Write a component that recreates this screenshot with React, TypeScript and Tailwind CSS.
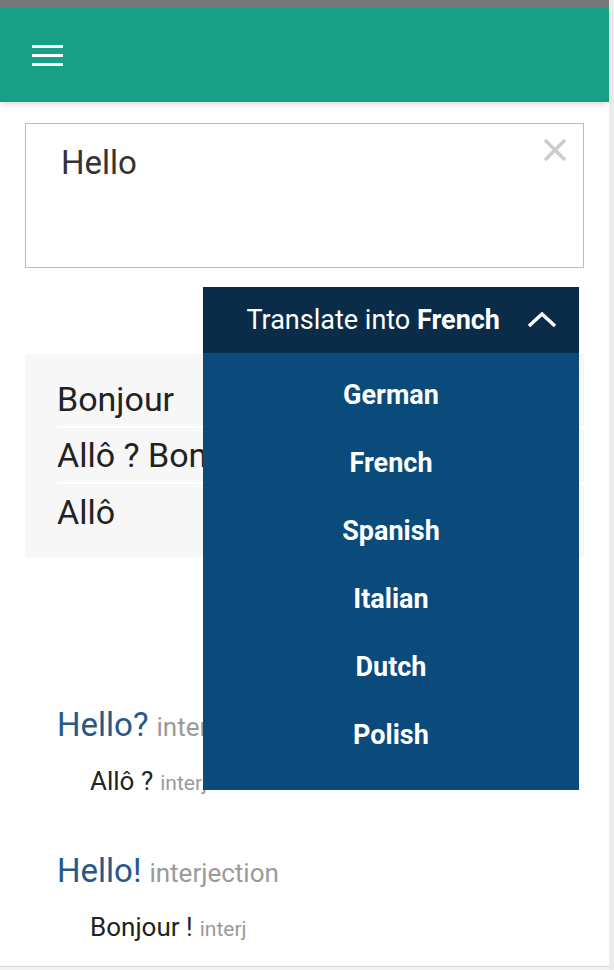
import React from "react";

const languages = ["German", "French", "Spanish", "Italian", "Dutch", "Polish"];

const results = ["Bonjour", "Allô ? Bonjour", "Allô"];

const entries = [
  { word: "Hello?", pos: "interjection", tr: "Allô ?", trPos: "interj" },
  { word: "Hello!", pos: "interjection", tr: "Bonjour !", trPos: "interj" },
];

export default function App() {
  return (
    <div
      className="flex w-[614px] h-[970px] overflow-hidden bg-white"
      style={{ fontFamily: "Roboto, 'Liberation Sans', sans-serif" }}
    >
      <div className="w-[609px] flex flex-col">
        <div className="h-[8px] bg-[#767676]" />
        <header className="h-[94px] bg-[#17a086] shadow-md flex items-center pl-[32px] relative z-20">
          <div className="flex flex-col gap-[6px] w-[31px]">
            <span className="h-[3px] bg-white" />
            <span className="h-[3px] bg-white" />
            <span className="h-[3px] bg-white" />
          </div>
        </header>

        <main className="px-[25px] flex flex-col">
          <div className="mt-[21px] h-[145px] border border-[#bdbdbd] flex justify-between pl-[35px] pr-[16px]">
            <div className="pt-[19px] text-[33px] leading-[40px] text-[#333]">Hello</div>
            <button className="mt-[14px] h-[24px] w-[24px] text-[#cbcbcb]">
              <svg viewBox="0 0 24 24" className="w-[24px] h-[24px]" fill="none" stroke="currentColor" strokeWidth="3.5">
                <path d="M2 2 L22 22 M22 2 L2 22" />
              </svg>
            </button>
          </div>

          <div className="relative z-10 mt-[19px] ml-auto mr-[5px] w-[376px]">
            <div className="h-[66px] bg-[#0b2c48] flex items-center justify-end gap-[27px] pr-[22px] text-white text-[27px]">
              <span>
                Translate into <span className="font-bold">French</span>
              </span>
              <svg viewBox="0 0 30 16" className="w-[30px] h-[16px]" fill="none" stroke="currentColor" strokeWidth="3.5">
                <polyline points="2,14 15,2 28,14" />
              </svg>
            </div>
            <ul className="absolute top-full left-0 right-0 bg-[#0a4b7b] pt-[8px] pb-[21px]">
              {languages.map((l) => (
                <li key={l} className="h-[68px] flex items-center justify-center text-white font-bold text-[27px]">
                  {l}
                </li>
              ))}
            </ul>
          </div>

          <div className="mt-[1px] bg-[#f7f7f7] pt-[18px] pb-[17px]">
            {results.map((r, i) => (
              <div
                key={r}
                className={`ml-[32px] h-[56px] flex items-center text-[34px] text-[#222] ${
                  i < results.length - 1 ? "border-b-2 border-white" : ""
                }`}
              >
                {r}
              </div>
            ))}
          </div>

          <div className="mt-[148px] pl-[32px] flex flex-col">
            {entries.map((e, i) => (
              <div key={e.word} className={i > 0 ? "mt-[54px]" : ""}>
                <div className="h-[40px] flex items-baseline gap-[8px]">
                  <span className="text-[33px] leading-[40px] text-[#285887]">{e.word}</span>
                  <span className="text-[26px] text-[#9a9a9a]">{e.pos}</span>
                </div>
                <div className="mt-[20px] pl-[33px] h-[32px] flex items-baseline gap-[7px]">
                  <span className="text-[26px] leading-[32px] text-[#222]">{e.tr}</span>
                  <span className="text-[21px] text-[#9a9a9a]">{e.trPos}</span>
                </div>
              </div>
            ))}
          </div>
        </main>
        <div className="mt-auto h-[4px] border-t border-[#d6d6d6] bg-[#f3f3f3]" />
      </div>
      <div className="w-[5px] bg-[#ececec]" />
    </div>
  );
}
